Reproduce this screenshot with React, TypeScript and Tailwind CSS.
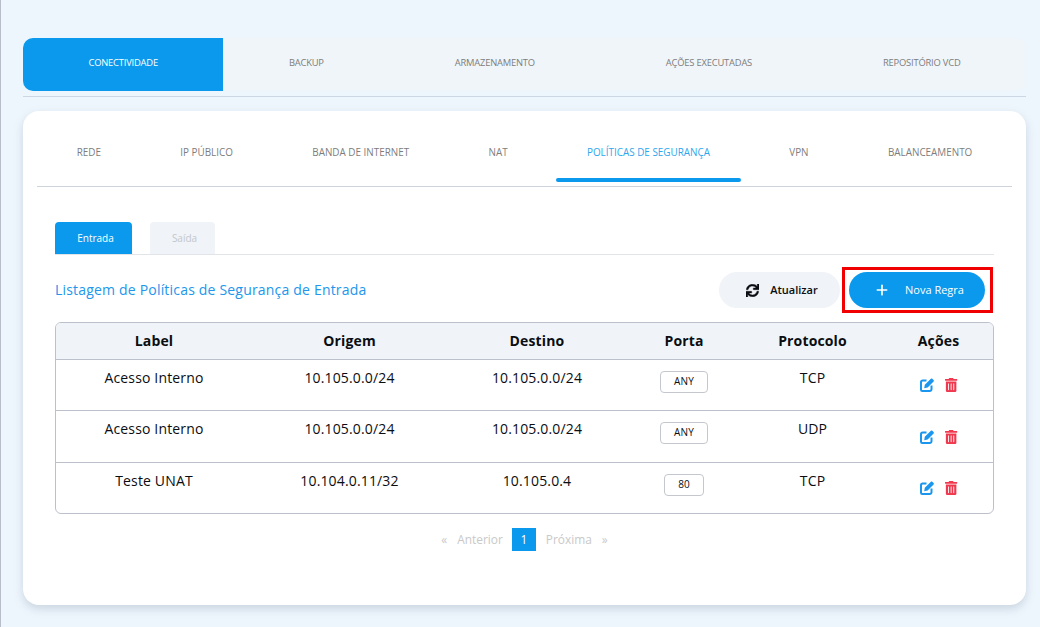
import { FaSync, FaTrashAlt } from 'react-icons/fa';
import { FiPlus } from 'react-icons/fi';

const topTabs = ['CONECTIVIDADE', 'BACKUP', 'ARMAZENAMENTO', 'AÇÕES EXECUTADAS', 'REPOSITÓRIO VCD'];
const subTabs = ['REDE', 'IP PÚBLICO', 'BANDA DE INTERNET', 'NAT', 'POLÍTICAS DE SEGURANÇA', 'VPN', 'BALANCEAMENTO'];

const rows = [
  { label: 'Acesso Interno', origem: '10.105.0.0/24', destino: '10.105.0.0/24', porta: 'ANY', protocolo: 'TCP', height: 'h-[51px]', iconTop: 'pt-[18px]' },
  { label: 'Acesso Interno', origem: '10.105.0.0/24', destino: '10.105.0.0/24', porta: 'ANY', protocolo: 'UDP', height: 'h-[52px]', iconTop: 'pt-[19px]' },
  { label: 'Teste UNAT', origem: '10.104.0.11/32', destino: '10.105.0.4', porta: '80', protocolo: 'TCP', height: 'h-[51px]', iconTop: 'pt-[18px]' },
];

function EditIcon() {
  return (
    <svg viewBox="0 0 14 14" className="h-[14px] w-[14px] text-[#1b96ee]" fill="none">
      <path
        d="M6.5 2.5H2.8A1.8 1.8 0 0 0 1 4.3v7.4a1.3 1.3 0 0 0 1.3 1.3h7.4a1.8 1.8 0 0 0 1.8-1.8V7.5"
        stroke="currentColor"
        strokeWidth="2"
      />
      <path d="M4.2 10.2L4.8 6.8L10.9 0.8C11.3 0.4 11.9 0.4 12.3 0.8L13.6 2.1C14 2.5 14 3.1 13.6 3.5L7.6 9.6Z" fill="currentColor" />
    </svg>
  );
}

export default function App() {
  return (
    <div className="h-[627px] overflow-hidden border-l border-[#b9bdc9] bg-[#eef6fd] pl-[22px] pr-[14px] pt-[38px] font-['Open_Sans',sans-serif]">
      {/* Top tabs */}
      <div className="border-b border-[#ccd6e4] pb-[5px]">
        <div className="flex h-[53px] rounded-[10px] bg-[#f0f5f9]">
          {topTabs.map((tab, i) => (
            <div
              key={tab}
              className={`flex flex-auto items-center justify-center pb-[2px] text-[9.4px] tracking-[-0.2px] ${
                i === 0 ? 'rounded-l-[10px] bg-[#0a99ec] text-white' : 'text-[#7d7d7d]'
              }`}
            >
              {tab}
            </div>
          ))}
        </div>
      </div>

      {/* Card */}
      <div className="mt-[14px] h-[494px] rounded-2xl bg-white px-[14px] shadow-[0_4px_10px_rgba(120,140,160,0.3)]">
        <div className="flex h-[76px] justify-around border-b border-[#cfd4da]">
          {subTabs.map((tab) => {
            const active = tab === 'POLÍTICAS DE SEGURANÇA';
            return (
              <div
                key={tab}
                className={`relative flex h-[71px] items-center px-[31px] pt-[12px] text-[9.9px] ${
                  active ? 'text-[#2ea6ee]' : 'text-[#7d7d7d]'
                }`}
              >
                {tab}
                {active && <span className="absolute bottom-0 left-0 right-0 h-[4px] rounded-full bg-[#0a99ec]" />}
              </div>
            );
          })}
        </div>

        <div className="px-[18px] pt-[35px]">
          {/* Entrada / Saida */}
          <div className="flex gap-[18px] border-b border-[#e1e5ea]">
            <div className="flex h-[32px] w-[77px] items-center justify-center rounded-t-[4px] bg-[#0a99ec] pl-[4px] text-[10px] text-white">
              Entrada
            </div>
            <div className="flex h-[32px] w-[65px] items-center justify-center rounded-t-[4px] bg-[#f0f3f7] pl-[4px] text-[10px] text-[#c3c7cd]">
              Saída
            </div>
          </div>

          {/* Title and actions */}
          <div className="mt-[12px] flex h-[46px] items-center justify-between">
            <h2 className="pb-[2px] text-[14px] tracking-[0.19px] text-[#2196ec]">Listagem de Políticas de Segurança de Entrada</h2>
            <div className="flex items-center gap-[2px]">
              <button className="flex h-[36px] w-[121px] items-center justify-center gap-[11px] rounded-full bg-[#f0f3f7] pl-[5px] text-[11px] font-semibold text-[#0b0d12]">
                <FaSync className="h-[13px] w-[13px]" stroke="currentColor" strokeWidth={16} />
                Atualizar
              </button>
              <div className="mr-[1px] border-[3px] border-[#f00000] py-[2px] pl-[4px] pr-[5px]">
                <button className="flex h-[36px] w-[136px] items-center justify-center gap-[15px] rounded-full bg-[#0a99ec] pl-[4px] text-[11px] font-medium text-white">
                  <FiPlus className="h-[16px] w-[16px]" strokeWidth={2.5} />
                  Nova Regra
                </button>
              </div>
            </div>
          </div>

          {/* Table */}
          <div className="mt-[9px] w-[939px] overflow-hidden rounded-[6px] border border-[#bcc0ca]">
            <table className="w-full table-fixed border-collapse text-center text-[14px] tracking-[0.15px] text-[#0b0d12]">
              <colgroup>
                <col className="w-[196px]" />
                <col className="w-[195px]" />
                <col className="w-[180px]" />
                <col className="w-[114px]" />
                <col className="w-[143px]" />
                <col />
              </colgroup>
              <thead>
                <tr className="h-[36px] border-b border-[#bcc0ca] bg-[#f0f4f8] font-bold">
                  <th>Label</th>
                  <th>Origem</th>
                  <th>Destino</th>
                  <th>Porta</th>
                  <th>Protocolo</th>
                  <th>Ações</th>
                </tr>
              </thead>
              <tbody>
                {rows.map((row, i) => (
                  <tr key={i} className={`${row.height} border-b border-[#bcc0ca] align-top last:border-b-0`}>
                    <td className="pt-[7px]">{row.label}</td>
                    <td className="pt-[7px]">{row.origem}</td>
                    <td className="pt-[7px]">{row.destino}</td>
                    <td className="pt-[11px]">
                      <span
                        className={`mx-auto flex h-[22px] items-center justify-center rounded-[4px] border border-[#c4c7cd] text-[10px] ${
                          row.porta === '80' ? 'w-[40px]' : 'w-[48px]'
                        }`}
                      >
                        {row.porta}
                      </span>
                    </td>
                    <td className="pt-[7px]">{row.protocolo}</td>
                    <td className={row.iconTop}>
                      <div className="flex items-center justify-center gap-[11px] pl-[1px]">
                        <EditIcon />
                        <FaTrashAlt className="h-[14px] w-[12.25px] text-[#f0394f]" />
                      </div>
                    </td>
                  </tr>
                ))}
              </tbody>
            </table>
          </div>

          {/* Pagination */}
          <div className="mt-[14px] flex items-center justify-center text-[11.9px] text-[#c9c9c9]">
            <span className="mr-[10px]">«</span>
            <span className="mr-[9px]">Anterior</span>
            <span className="mr-[10px] flex h-[23px] w-[24px] items-center justify-center bg-[#0a99ec] text-white">1</span>
            <span className="mr-[10px]">Próxima</span>
            <span>»</span>
          </div>
        </div>
      </div>
    </div>
  );
}
